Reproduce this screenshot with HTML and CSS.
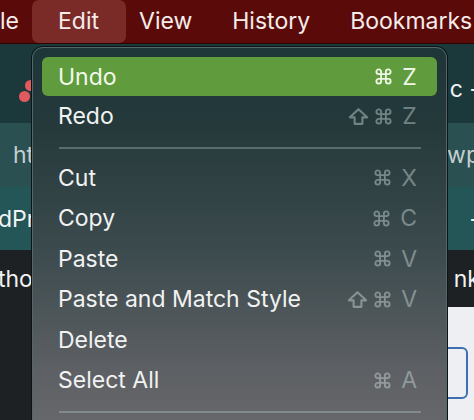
FILE: index.html
```html
<!DOCTYPE html>
<html>
<head>
<meta charset="utf-8">
<link rel="stylesheet" href="styles.css">
</head>
<body>
<div class="menubar">
  <span class="mb-item mb-first">le</span>
  <span class="mb-item mb-active">Edit</span>
  <span class="mb-item">View</span>
  <span class="mb-item">History</span>
  <span class="mb-item">Bookmarks</span>
</div>
<div class="browser">
  <div class="row row-title">
    <span class="dots"><span class="dot d1"></span><span class="dot d2"></span></span>
    <span class="right-txt title-txt">c -</span>
  </div>
  <div class="row row-url">
    <span class="left-txt url-txt url-left">ht</span>
    <span class="right-txt url-txt">wp</span>
  </div>
  <div class="row row-tab">
    <span class="left-txt tab-txt">dPr</span>
    <span class="right-txt tab-txt">-</span>
  </div>
  <div class="row row-dark">
    <span class="left-txt dark-txt">tho</span>
    <span class="right-txt dark-txt">nk</span>
  </div>
  <div class="row row-page">
    <div class="page-left"></div>
    <div class="page-right"><div class="blue-box"></div></div>
  </div>
</div>

<svg width="0" height="0" class="defs">
  <defs>
    <symbol id="cmd" viewBox="0 0 24 24">
      <path d="M18 3a3 3 0 0 0-3 3v12a3 3 0 0 0 3 3 3 3 0 0 0 3-3 3 3 0 0 0-3-3H6a3 3 0 0 0-3 3 3 3 0 0 0 3 3 3 3 0 0 0 3-3V6a3 3 0 0 0-3-3 3 3 0 0 0-3 3 3 3 0 0 0 3 3h12a3 3 0 0 0 3-3 3 3 0 0 0-3-3z" fill="none" stroke="currentColor" stroke-width="2.3"/>
    </symbol>
    <symbol id="shift" viewBox="0 0 24 22">
      <path d="M12 2.5 L22 12 H16.5 V19.5 H7.5 V12 H2 Z" fill="none" stroke="currentColor" stroke-width="2.4" stroke-linejoin="round"/>
    </symbol>
  </defs>
</svg>

<div class="menu">
  <div class="item active"><span class="label">Undo</span><span class="sc"><svg class="ic"><use href="#cmd"/></svg><span class="key">Z</span></span></div>
  <div class="item"><span class="label">Redo</span><span class="sc"><svg class="ic-shift"><use href="#shift"/></svg><svg class="ic"><use href="#cmd"/></svg><span class="key">Z</span></span></div>
  <div class="sep"></div>
  <div class="item"><span class="label">Cut</span><span class="sc"><svg class="ic"><use href="#cmd"/></svg><span class="key">X</span></span></div>
  <div class="item"><span class="label">Copy</span><span class="sc"><svg class="ic"><use href="#cmd"/></svg><span class="key">C</span></span></div>
  <div class="item"><span class="label">Paste</span><span class="sc"><svg class="ic"><use href="#cmd"/></svg><span class="key">V</span></span></div>
  <div class="item"><span class="label">Paste and Match Style</span><span class="sc"><svg class="ic-shift"><use href="#shift"/></svg><svg class="ic"><use href="#cmd"/></svg><span class="key">V</span></span></div>
  <div class="item"><span class="label">Delete</span><span class="sc"></span></div>
  <div class="item"><span class="label">Select All</span><span class="sc"><svg class="ic"><use href="#cmd"/></svg><span class="key">A</span></span></div>
  <div class="sep"></div>
</div>
</body>
</html>
```
FILE: styles.css
```css
html, body {
  margin: 0;
  padding: 0;
}
body {
  width: 474px;
  height: 420px;
  overflow: hidden;
  position: relative;
  font-family: "Inter", "Liberation Sans", sans-serif;
  background: #1d2124;
}
.defs {
  position: absolute;
}
.menubar {
  height: 43px;
  background: #5a0b09;
  border-bottom: 1px solid #2a0504;
  display: flex;
  align-items: center;
  gap: 40px;
  color: #f6ecea;
  font-size: 23px;
  white-space: nowrap;
}
.mb-item {
  line-height: 43px;
}
.mb-first {
  width: 18px;
  margin-left: 0;
}
.mb-active {
  padding: 0 27px 0 26px;
  margin: 0 -27px 0 -26px;
  background: #7a2a27;
  border-radius: 7px;
}
.browser {
  display: flex;
  flex-direction: column;
}
.row {
  display: flex;
  justify-content: space-between;
  align-items: center;
  font-size: 23px;
  white-space: nowrap;
  overflow: hidden;
}
.row-title {
  height: 79px;
  background: #1b393b;
}
.row-url {
  height: 64px;
  background: #2a5052;
}
.row-tab {
  height: 63px;
  background: #245658;
}
.row-dark {
  height: 57px;
  background: #1d2124;
}
.row-page {
  height: 120px;
  align-items: stretch;
}
.page-left {
  width: 40px;
  background: #1d2124;
}
.page-right {
  flex: 1;
  background: #eeeff2;
  display: flex;
  justify-content: flex-end;
  padding-top: 40px;
}
.blue-box {
  width: 40px;
  height: 52px;
  border: 2px solid #3f6fb0;
  border-radius: 6px;
  margin-right: 6px;
  box-sizing: border-box;
}
.left-txt {
  margin-left: -2px;
}
.url-left {
  margin-left: 13px;
}
.right-txt {
  margin-right: -6px;
}
.url-txt { color: #c5cfcf; }
.tab-txt { color: #f2f5f5; }
.dark-txt { color: #f2f2f2; }
.title-txt { color: #f2f2f2; margin-top: 10px; }
.dots {
  position: relative;
  width: 40px;
  height: 79px;
}
.dot {
  position: absolute;
  width: 11px;
  height: 11px;
  border-radius: 50%;
  background: #e05a5e;
}
.d1 { left: 19px; top: 47px; }
.d2 { left: 25px; top: 36px; }

.menu {
  position: absolute;
  left: 32px;
  top: 47px;
  width: 415px;
  height: 400px;
  box-sizing: border-box;
  padding: 9px 9px 0;
  border-radius: 11px;
  border: 1px solid #55676a;
  box-shadow: 0 0 0 1px #0c1416;
  background: linear-gradient(180deg, #1e3638 0%, #25393b 20%, #3b4a4d 50%, #5c5f63 80%, #6b6b6f 100%);
  color: #f1f2f2;
  font-size: 23px;
}
.item {
  height: 40.5px;
  display: flex;
  align-items: center;
  justify-content: space-between;
  padding: 0 20px 0 16px;
  border-radius: 6px;
  white-space: nowrap;
}
.item.active {
  height: 39px;
  background: #609c3e;
  color: #f3f8ec;
}
.sc {
  display: flex;
  gap: 9px;
  align-items: center;
  color: rgba(220, 235, 235, 0.42);
}
.item.active .sc {
  color: #eef6e6;
}
.ic {
  width: 19px;
  height: 19px;
}
.ic-shift {
  width: 21px;
  height: 19px;
  margin-right: -4px;
}
.key {
  min-width: 15px;
  text-align: center;
}
.sep {
  height: 2px;
  margin: 10px 16px 9px 17px;
  background: rgba(200, 215, 215, 0.32);
}
```
